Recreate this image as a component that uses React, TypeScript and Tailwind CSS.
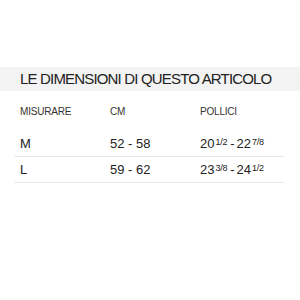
export default function App() {
  const rows = [
    { size: "M", cm: "52 - 58", a: "20", af: "1/2", b: "22", bf: "7/8" },
    { size: "L", cm: "59 - 62", a: "23", af: "3/8", b: "24", bf: "1/2" },
  ];
  return (
    <div className="w-[300px] h-[300px] bg-white pt-[67px] text-[#222]" style={{ fontFamily: "'Liberation Sans', Arial, sans-serif" }}>
      <div className="h-[24px] bg-[#f3f3f3] pl-5 flex items-center">
        <h1 className="text-[15px] leading-[24px] tracking-[-0.055em] font-normal text-[#222]">LE DIMENSIONI DI QUESTO ARTICOLO</h1>
      </div>
      <div className="mx-[14px] w-[270px]">
        <div className="flex pt-[15px] pb-[13px] text-[10px] leading-[12px] text-[#333] tracking-[-0.02em]">
          <div className="w-[96px] pl-[6px]">MISURARE</div>
          <div className="w-[90px]">CM</div>
          <div className="flex-1">POLLICI</div>
        </div>
        {rows.map((r) => (
          <div key={r.size} className="flex h-[26px] border-b border-[#e8e8e8] text-[13px] leading-[25px]">
            <div className="w-[96px] pl-[6px]">{r.size}</div>
            <div className="w-[90px]">{r.cm}</div>
            <div className="flex-1 flex items-start">
              <span>{r.a}</span>
              <span className="text-[9px] leading-[22px] ml-[1px] tracking-[-0.03em]">{r.af}</span>
              <span className="ml-[3px]">-</span>
              <span className="ml-[2px]">{r.b}</span>
              <span className="text-[9px] leading-[22px] ml-[1px] tracking-[-0.03em]">{r.bf}</span>
            </div>
          </div>
        ))}
      </div>
    </div>
  );
}
